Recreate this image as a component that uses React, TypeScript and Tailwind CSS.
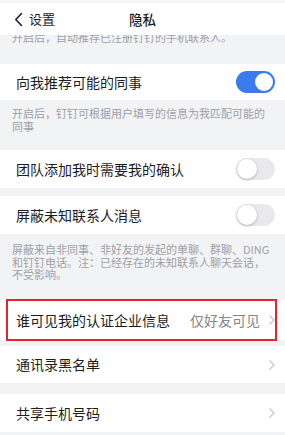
import React from 'react'

const font = { fontFamily: '"Noto Sans CJK SC", "Noto Sans", sans-serif' }

const Toggle: React.FC<{ on?: boolean }> = ({ on }) =>
  on ? (
    <div className="w-[39px] h-[22px] rounded-full bg-[#3a7bf0] relative">
      <div className="absolute right-[2px] top-[2px] w-[18px] h-[18px] rounded-full bg-white" />
    </div>
  ) : (
    <div className="w-[39px] h-[22px] rounded-full bg-[#e9e9eb] relative">
      <div className="absolute left-[1px] top-[1px] w-[20px] h-[20px] rounded-full bg-white shadow-[0_1px_3px_rgba(0,0,0,0.25)]" />
    </div>
  )

const Chevron = () => (
  <svg width="6" height="10" viewBox="0 0 6 10" fill="none" className="ml-[9px]">
    <path d="M1 1l4 4-4 4" stroke="#c4c4c8" strokeWidth="1.2" strokeLinecap="round" strokeLinejoin="round" />
  </svg>
)

const Row: React.FC<{ label: string; right?: React.ReactNode; h?: string }> = ({ label, right, h = 'h-[37px]' }) => (
  <div className={`bg-white ${h} flex items-center justify-between pl-[16px] pr-[10px]`}>
    <span className="text-[14px] text-[#1d1d1f]">{label}</span>
    <div className="flex items-center">{right}</div>
  </div>
)

const Desc: React.FC<{ children: React.ReactNode; className?: string }> = ({ children, className }) => (
  <div className={`px-[12px] text-[11px] leading-[12.5px] text-[#a0a0a5] ${className ?? ''}`}>{children}</div>
)

export default function App() {
  return (
    <div className="w-[285px] h-[435px] overflow-hidden bg-[#f2f3f5] flex flex-col" style={font}>
      <div className="h-[3px] bg-[#f4f4f6]" />
      <div className="bg-white h-[32px] flex items-center relative">
        <div className="flex items-center pl-[14px]">
          <svg width="9" height="15" viewBox="0 0 9 15" fill="none">
            <path d="M7.5 1.5L1.8 7.5l5.7 6" stroke="#222" strokeWidth="1.6" strokeLinecap="round" strokeLinejoin="round" />
          </svg>
          <span className="ml-[6px] text-[13px] text-[#1d1d1f]">设置</span>
        </div>
        <span className="absolute left-1/2 -translate-x-1/2 text-[13.5px] font-medium text-[#1d1d1f]">隐私</span>
      </div>
      <div className="h-[29px] overflow-hidden">
        <Desc className="-mt-[4px]">开启后，自动推荐已注册钉钉的手机联系人。</Desc>
      </div>
      <Row label="向我推荐可能的同事" h="h-[36px]" right={<Toggle on />} />
      <div className="h-[50px] pt-[7px]">
        <Desc>开启后，钉钉可根据用户填写的信息为我匹配可能的同事</Desc>
      </div>
      <Row label="团队添加我时需要我的确认" h="h-[38px]" right={<Toggle />} />
      <div className="h-[8px]" />
      <Row label="屏蔽未知联系人消息" h="h-[38px]" right={<Toggle />} />
      <div className="h-[66px] pt-[9px]">
        <Desc>屏蔽来自非同事、非好友的发起的单聊、群聊、DING和钉钉电话。注：已经存在的未知联系人聊天会话，不受影响。</Desc>
      </div>
      <div className="relative">
        <Row
          label="谁可见我的认证企业信息"
          h="h-[40px]"
          right={
            <>
              <span className="text-[14px] text-[#86868b]">仅好友可见</span>
              <Chevron />
            </>
          }
        />
        <div className="absolute left-[6px] right-[8px] -top-[1px] -bottom-[1px] border-2 border-[#e3242b] pointer-events-none" />
      </div>
      <div className="h-[6px]" />
      <Row label="通讯录黑名单" h="h-[37px]" right={<Chevron />} />
      <div className="h-[11px]" />
      <Row label="共享手机号码" h="h-[38px]" right={<Chevron />} />
    </div>
  )
}
